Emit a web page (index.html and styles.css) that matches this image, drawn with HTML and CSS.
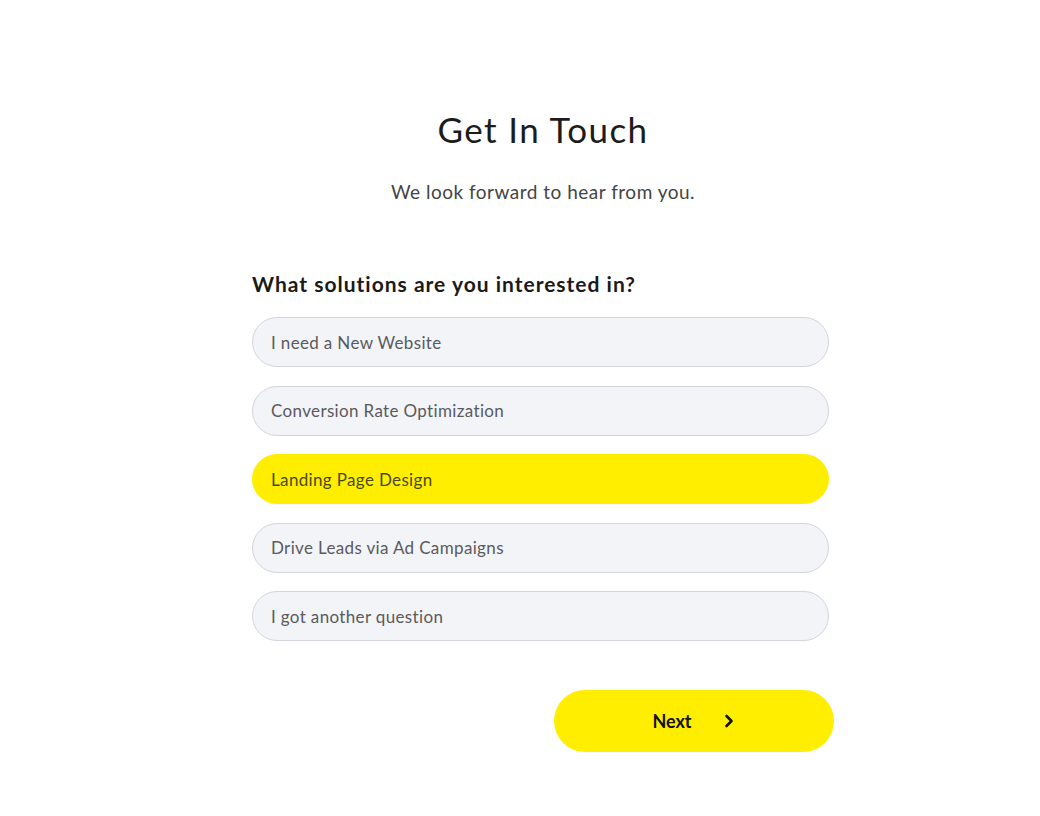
FILE: index.html
```html
<!DOCTYPE html>
<html lang="en">
<head>
    <meta charset="utf-8">
    <title>Get In Touch</title>
    <link rel="stylesheet" href="styles.css">
</head>
<body>
    <div class="wrap">
        <h1 class="title">Get In Touch</h1>
        <p class="subtitle">We look forward to hear from you.</p>

        <h2 class="question">What solutions are you interested in?</h2>
        <div class="options">
            <div class="option">I need a New Website</div>
            <div class="option">Conversion Rate Optimization</div>
            <div class="option selected">Landing Page Design</div>
            <div class="option">Drive Leads via Ad Campaigns</div>
            <div class="option">I got another question</div>
        </div>

        <div class="actions">
            <button class="next" type="button">
                <span>Next</span>
                <svg width="14" height="14" viewBox="0 0 14 14"><path d="M4.5 2 L9.5 7 L4.5 12" fill="none" stroke="#111" stroke-width="2.6" stroke-linecap="round" stroke-linejoin="round"/></svg>
            </button>
        </div>
    </div>
</body>
</html>
```

FILE: styles.css
```css
body{
    margin: 0;
    background: #fff;
    font-family: Lato, "Open Sans", sans-serif;
    color: #222;
}

.wrap{
    width: 582px;
    margin-left: 252px;
    padding-top: 107px;
}

.title{
    margin: 0;
    text-align: center;
    font-size: 35px;
    font-weight: 400;
    letter-spacing: 1.4px;
    line-height: 44px;
    color: #1c1c1c;
}
.subtitle{
    margin: 29px 0 0;
    text-align: center;
    font-size: 19px;
    letter-spacing: 0.5px;
    line-height: 24px;
    color: #444;
}

.question{
    margin: 66px 0 0;
    font-size: 21px;
    font-weight: 700;
    letter-spacing: 1px;
    line-height: 28px;
    color: #1a1a1a;
}

.options{
    width: 577px;
    margin-top: 19px;
    display: flex;
    flex-direction: column;
    gap: 18.5px;
}
.option{
    box-sizing: border-box;
    height: 50px;
    padding: 0 18px;
    display: flex;
    align-items: center;
    border: 1.5px solid #d4d5da;
    border-radius: 25px;
    background: #f3f4f8;
    font-size: 17px;
    letter-spacing: 0.35px;
    color: #5a5a5e;
}
.option.selected{
    background: #ffee00;
    border-color: #ffee00;
    color: #4a4a10;
}

.actions{
    margin-top: 48.5px;
    display: flex;
    justify-content: flex-end;
}
.next{
    width: 280px;
    height: 62px;
    border: none;
    border-radius: 31px;
    background: #ffee00;
    display: flex;
    align-items: center;
    justify-content: center;
    gap: 26px;
    font-family: Lato, "Open Sans", sans-serif;
    font-size: 18px;
    font-weight: 700;
    color: #111;
    cursor: pointer;
}
.next svg{
    margin-left: 4px;
}
```
